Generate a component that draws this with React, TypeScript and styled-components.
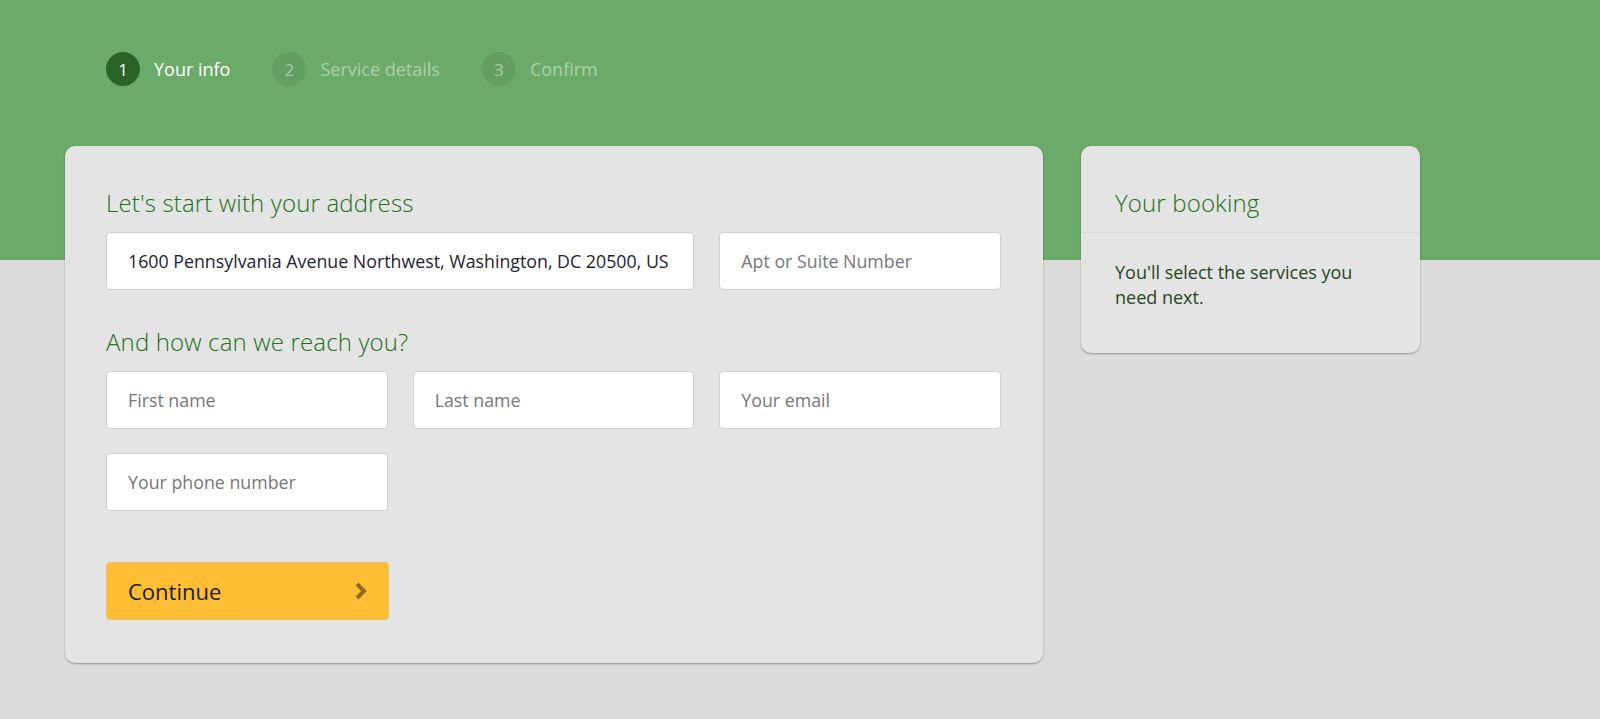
import styled, { createGlobalStyle } from "styled-components";

const GlobalStyle = createGlobalStyle`
  html, body {
    margin: 0;
    padding: 0;
  }
  body {
    background: #dcdcdc;
    font-family: "Open Sans", "Noto Sans", "Liberation Sans", sans-serif;
    -webkit-font-smoothing: antialiased;
  }
  * { box-sizing: border-box; }
`;

// green band on top, grey below
const Page = styled.div`
  min-height: 100vh;
  background: linear-gradient(to bottom, #6caa69 0, #6caa69 260px, #dcdcdc 260px);
  padding-top: 52px;
`;

const Steps = styled.ol`
  list-style: none;
  margin: 0;
  padding: 0 0 0 106px;
  display: flex;
  align-items: center;
  gap: 42px;
  height: 34px;
`;

const Step = styled.li<{ $active?: boolean }>`
  display: flex;
  align-items: center;
  gap: 14px;
  font-size: 18px;
  font-weight: 400;
  color: ${(p) => (p.$active ? "#ffffff" : "rgba(255, 255, 255, 0.45)")};
`;

const StepNum = styled.span<{ $active?: boolean }>`
  width: 34px;
  height: 34px;
  border-radius: 50%;
  display: flex;
  align-items: center;
  justify-content: center;
  font-size: 17px;
  background: ${(p) => (p.$active ? "#2b6227" : "rgba(0, 0, 0, 0.07)")};
  color: ${(p) => (p.$active ? "#ffffff" : "rgba(255, 255, 255, 0.45)")};
`;

const Columns = styled.div`
  display: flex;
  align-items: flex-start;
  gap: 38px;
  padding-left: 65px;
  margin-top: 60px;
`;

const Card = styled.section`
  background: #e4e4e4;
  border-radius: 10px;
  box-shadow: 0 1px 2px rgba(0, 0, 0, 0.35);
`;

const FormCard = styled(Card)`
  width: 978px;
  padding: 42px 42px 43px 41px;
`;

const Heading = styled.h2<{ $spaced?: boolean; $flush?: boolean }>`
  margin: ${(p) => (p.$spaced ? "37px" : "0")} 0 ${(p) => (p.$flush ? "0" : "14px")};
  font-size: 24px;
  line-height: 30px;
  font-weight: 300;
  letter-spacing: 0.15px;
  color: #22701a;
`;

const FieldGrid = styled.div`
  display: grid;
  grid-template-columns: repeat(3, 1fr);
  column-gap: 25px;
  row-gap: 24px;
`;

const Input = styled.input<{ $span?: number }>`
  grid-column: span ${(p) => p.$span ?? 1};
  height: 58px;
  width: 100%;
  padding: 0 21px;
  border: 1px solid #cfcfcf;
  border-radius: 4px;
  background: #ffffff;
  font-family: inherit;
  font-size: 17.8px;
  color: #1f2233;
  outline: none;

  &::placeholder {
    color: #777777;
  }
`;

const ContinueButton = styled.button`
  margin-top: 51px;
  width: 283px;
  height: 58px;
  display: flex;
  align-items: center;
  justify-content: space-between;
  padding: 0 20px 0 21px;
  background: #ffbe33;
  border: 1px solid #e3c36f;
  border-radius: 4px;
  font-family: inherit;
  font-size: 22px;
  font-weight: 400;
  color: #1c1c1c;
  cursor: pointer;
`;

const SideCard = styled(Card)`
  width: 339px;
`;

const SideHeader = styled.div`
  padding: 42px 34px 14px;
  border-bottom: 1px solid #d3dcd2;
`;

const SideBody = styled.p`
  margin: 0;
  padding: 27px 34px 43px;
  font-size: 18px;
  line-height: 25px;
  color: #27461f;
`;

function Chevron() {
  return (
    <svg width="14" height="20" viewBox="0 0 14 20" aria-hidden="true">
      <path d="M3 3 L10 10 L3 17" fill="none" stroke="#8d6c1b" strokeWidth="4" strokeLinecap="butt" strokeLinejoin="miter" />
    </svg>
  );
}

export default function App() {
  return (
    <>
      <GlobalStyle />
      <Page>
        <Steps>
          <Step $active>
            <StepNum $active>1</StepNum>
            Your info
          </Step>
          <Step>
            <StepNum>2</StepNum>
            Service details
          </Step>
          <Step>
            <StepNum>3</StepNum>
            Confirm
          </Step>
        </Steps>

        <Columns>
          <FormCard>
            <Heading>Let's start with your address</Heading>
            <FieldGrid>
              <Input $span={2} defaultValue="1600 Pennsylvania Avenue Northwest, Washington, DC 20500, US" />
              <Input placeholder="Apt or Suite Number" />
            </FieldGrid>

            <Heading $spaced>And how can we reach you?</Heading>
            <FieldGrid>
              <Input placeholder="First name" />
              <Input placeholder="Last name" />
              <Input placeholder="Your email" />
              <Input placeholder="Your phone number" />
            </FieldGrid>

            <ContinueButton type="button">
              Continue
              <Chevron />
            </ContinueButton>
          </FormCard>

          <SideCard>
            <SideHeader>
              <Heading $flush>Your booking</Heading>
            </SideHeader>
            <SideBody>You'll select the services you need next.</SideBody>
          </SideCard>
        </Columns>
      </Page>
    </>
  );
}
